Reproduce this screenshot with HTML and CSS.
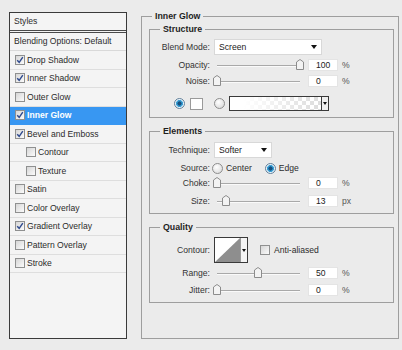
FILE: index.html
```html
<!DOCTYPE html>
<html lang="en">
<head>
  <meta charset="UTF-8" />
  <title>Layer Style - Inner Glow</title>
  <link rel="stylesheet" href="styles.css">
</head>
<body>
  <div class="dialog">
    <ul class="styles-list">
      <li class="list-head">Styles</li>
      <li class="list-blend">Blending Options: Default</li>
      <li class="list-item"><span class="cb on"><svg viewBox="0 0 8 8"><path d="M1.2 4.2L3.2 6.3L6.8 1.2"/></svg></span>Drop Shadow</li>
      <li class="list-item"><span class="cb on"><svg viewBox="0 0 8 8"><path d="M1.2 4.2L3.2 6.3L6.8 1.2"/></svg></span>Inner Shadow</li>
      <li class="list-item"><span class="cb"></span>Outer Glow</li>
      <li class="list-item active"><span class="cb on"><svg viewBox="0 0 8 8"><path d="M1.2 4.2L3.2 6.3L6.8 1.2"/></svg></span>Inner Glow</li>
      <li class="list-item"><span class="cb on"><svg viewBox="0 0 8 8"><path d="M1.2 4.2L3.2 6.3L6.8 1.2"/></svg></span>Bevel and Emboss</li>
      <li class="list-item sub"><span class="cb"></span>Contour</li>
      <li class="list-item sub"><span class="cb"></span>Texture</li>
      <li class="list-item"><span class="cb"></span>Satin</li>
      <li class="list-item"><span class="cb"></span>Color Overlay</li>
      <li class="list-item"><span class="cb on"><svg viewBox="0 0 8 8"><path d="M1.2 4.2L3.2 6.3L6.8 1.2"/></svg></span>Gradient Overlay</li>
      <li class="list-item"><span class="cb"></span>Pattern Overlay</li>
      <li class="list-item"><span class="cb"></span>Stroke</li>
    </ul>

    <fieldset class="group outer">
      <legend>Inner Glow</legend>

      <fieldset class="group inner structure">
        <legend>Structure</legend>
        <div class="row r-blend">
          <span class="lbl">Blend Mode:</span>
          <div class="select blend"><span>Screen</span><i class="arrow"></i></div>
        </div>
        <div class="row r-opacity">
          <span class="lbl">Opacity:</span>
          <div class="slider"><svg class="thumb" style="left: 82px" viewBox="0 0 8 11"><path d="M0.5 10.5V3L4 0.5L7.5 3V10.5Z"/></svg></div>
          <span class="num">100</span><span class="unit">%</span>
        </div>
        <div class="row r-noise">
          <span class="lbl">Noise:</span>
          <div class="slider"><svg class="thumb" style="left: -1px" viewBox="0 0 8 11"><path d="M0.5 10.5V3L4 0.5L7.5 3V10.5Z"/></svg></div>
          <span class="num">0</span><span class="unit">%</span>
        </div>
        <div class="row r-color">
          <span class="radio on"></span>
          <span class="swatch"></span>
          <span class="radio radio-grad"></span>
          <div class="grad"><span class="grad-fill"></span><span class="grad-arrow"><i class="arrow"></i></span></div>
        </div>
      </fieldset>

      <fieldset class="group inner elements">
        <legend>Elements</legend>
        <div class="row r-technique">
          <span class="lbl">Technique:</span>
          <div class="select technique"><span>Softer</span><i class="arrow"></i></div>
        </div>
        <div class="row r-source">
          <span class="lbl">Source:</span>
          <span class="radio src-center"></span><span class="opt">Center</span>
          <span class="radio on src-edge"></span><span class="opt">Edge</span>
        </div>
        <div class="row r-choke">
          <span class="lbl">Choke:</span>
          <div class="slider"><svg class="thumb" style="left: -1px" viewBox="0 0 8 11"><path d="M0.5 10.5V3L4 0.5L7.5 3V10.5Z"/></svg></div>
          <span class="num">0</span><span class="unit">%</span>
        </div>
        <div class="row r-size">
          <span class="lbl">Size:</span>
          <div class="slider"><svg class="thumb" style="left: 8px" viewBox="0 0 8 11"><path d="M0.5 10.5V3L4 0.5L7.5 3V10.5Z"/></svg></div>
          <span class="num">13</span><span class="unit">px</span>
        </div>
      </fieldset>

      <fieldset class="group inner quality">
        <legend>Quality</legend>
        <div class="row r-contour">
          <span class="lbl">Contour:</span>
          <div class="contour">
            <svg class="curve" viewBox="0 0 25 24"><path d="M0 24L25 0V24Z"/></svg>
            <span class="contour-arrow"><i class="arrow"></i></span>
          </div>
          <span class="cb aa"></span><span class="opt">Anti-aliased</span>
        </div>
        <div class="row r-range">
          <span class="lbl">Range:</span>
          <div class="slider"><svg class="thumb" style="left: 40px" viewBox="0 0 8 11"><path d="M0.5 10.5V3L4 0.5L7.5 3V10.5Z"/></svg></div>
          <span class="num">50</span><span class="unit">%</span>
        </div>
        <div class="row r-jitter">
          <span class="lbl">Jitter:</span>
          <div class="slider"><svg class="thumb" style="left: -1px" viewBox="0 0 8 11"><path d="M0.5 10.5V3L4 0.5L7.5 3V10.5Z"/></svg></div>
          <span class="num">0</span><span class="unit">%</span>
        </div>
      </fieldset>
    </fieldset>
  </div>
</body>
</html>
```

FILE: styles.css
```css
* {
  box-sizing: border-box;
}
body {
  margin: 0;
  width: 402px;
  height: 350px;
  overflow: hidden;
  background: #ebebeb;
  font-family: 'Liberation Sans', Arial, sans-serif;
  font-size: 8.6px;
  color: #2b2b2b;
}
.dialog {
  display: flex;
  align-items: flex-start;
  gap: 14px;
  padding: 10px 0 0 9px;
}

/* lista stilova lijevo */
.styles-list {
  list-style: none;
  margin: 2px 0 0;
  padding: 0;
  width: 118px;
  height: 327px;
  border: 1px solid #3a3a3a;
  background: #f4f4f4;
}
.list-head {
  height: 20px;
  line-height: 17px;
  padding-left: 4px;
  border-bottom: 3px double #4a4a4a;
}
.list-blend {
  height: 18px;
  line-height: 17px;
  padding-left: 4px;
  border-bottom: 1px solid #d9d9d9;
}
.list-item {
  height: 18.5px;
  display: flex;
  align-items: center;
  gap: 2px;
  padding-left: 5px;
  border-bottom: 1px solid #dedede;
}
.list-item.sub {
  padding-left: 16px;
}
.list-item.active {
  background: #3897f2;
  color: #fff;
  font-weight: 700;
  border-bottom-color: #3897f2;
}
.cb {
  width: 10px;
  height: 10px;
  flex: none;
  border: 1px solid #8f9090;
  background: linear-gradient(135deg, #d6d6d6, #fbfbfb);
}
.cb svg {
  display: block;
  width: 8px;
  height: 8px;
}
.cb path {
  fill: none;
  stroke: #2f4a8e;
  stroke-width: 1.4;
}

/* grupe desno */
.group {
  margin: 0;
  min-width: 0;
  border: 1px solid #9e9e9e;
}
.group legend {
  padding: 0 3px;
  line-height: 12px;
  font-size: 8.8px;
  font-weight: 700;
  color: #1e1e1e;
}
.outer {
  width: 258px;
  padding: 0 4px 35px 7px;
}
.outer > legend {
  margin-left: 3px;
}
.inner {
  width: 245px;
  padding: 0 0 6px 0;
  margin-top: 7px;
}
.inner > legend {
  margin-left: 10px;
}
.structure {
  margin-top: 1px;
}

.row {
  display: flex;
  align-items: center;
  height: 12px;
}
.lbl {
  width: 60px;
  margin-right: 4px;
  text-align: right;
  color: #333;
}
.r-blend { margin-top: 4px; height: 16px; }
.r-opacity { margin-top: 4px; }
.r-noise { margin-top: 4px; }
.r-color { margin-top: 9px; height: 15px; padding-left: 24px; }
.r-technique { margin-top: 5px; height: 16px; }
.r-source { margin-top: 4px; }
.r-choke { margin-top: 3px; }
.r-size { margin-top: 6px; }
.r-contour { margin-top: 4px; height: 26px; }
.r-range { margin-top: 4px; }
.r-jitter { margin-top: 5px; }

.select {
  height: 16px;
  display: flex;
  align-items: center;
  justify-content: space-between;
  padding: 0 4px 0 4px;
  background: #fff;
  border: 1px solid #d8d8d8;
  color: #222;
}
.blend { width: 108px; }
.technique { width: 58px; }
.arrow {
  display: block;
  width: 0;
  height: 0;
  border-left: 3px solid transparent;
  border-right: 3px solid transparent;
  border-top: 4px solid #111;
}

.slider {
  position: relative;
  width: 90px;
  height: 12px;
}
.slider::before {
  content: '';
  position: absolute;
  left: 3px;
  top: 6px;
  width: 83px;
  height: 1px;
  background: #a9a9a9;
  box-shadow: 0 1px 0 #fafafa;
}
.thumb {
  position: absolute;
  top: 0;
  width: 8px;
  height: 11px;
}
.thumb path {
  fill: #f3f3f3;
  stroke: #8c8c8c;
}
.num {
  width: 30px;
  height: 12px;
  margin-left: 4px;
  padding-left: 7px;
  line-height: 10px;
  background: #fff;
  border: 1px solid #e4e4e4;
  color: #222;
}
.unit {
  margin-left: 4px;
  color: #555;
}

.radio {
  width: 11px;
  height: 11px;
  flex: none;
  border-radius: 50%;
  border: 1px solid #8d8d8d;
  background: radial-gradient(circle at 40% 35%, #fff, #d4d4d4);
}
.radio.on {
  border-color: #62809a;
  background: radial-gradient(circle, #15507f 0 1.8px, #3aa0d6 2.4px 3.2px, #e8f3fa 3.8px);
}
.swatch {
  width: 13px;
  height: 12px;
  margin-left: 5px;
  background: #fff;
  border: 1px solid #9a9a9a;
}
.radio-grad {
  margin-left: 11px;
}
.grad {
  display: flex;
  width: 100px;
  height: 15px;
  margin-left: 4px;
  border: 1px solid #3a3a3a;
}
.grad-fill {
  flex: 1;
  background:
    linear-gradient(90deg, #fff 15%, rgba(255, 255, 255, 0) 100%),
    repeating-conic-gradient(#dcdcdc 0 25%, #fff 0 50%) 0 0 / 8px 8px;
}
.grad-arrow {
  width: 7px;
  display: flex;
  align-items: center;
  justify-content: center;
  border-left: 1px solid #3a3a3a;
  background: #f0f0f0;
}
.grad-arrow .arrow {
  border-left-width: 2px;
  border-right-width: 2px;
  border-top-width: 3px;
}

.src-center {
  margin-left: -2px;
}
.opt {
  margin-left: 3px;
  color: #2b2b2b;
}
.src-edge {
  margin-left: 13px;
}

.contour {
  display: flex;
  width: 34px;
  height: 26px;
  border: 1px solid #3a3a3a;
  background: #fff;
}
.curve {
  display: block;
  width: 25px;
  height: 24px;
}
.curve path {
  fill: #8e8e8e;
}
.contour-arrow {
  flex: 1;
  display: flex;
  align-items: center;
  justify-content: center;
  border-left: 1px solid #9a9a9a;
  background: #f4f4f4;
}
.contour-arrow .arrow {
  border-left-width: 2px;
  border-right-width: 2px;
  border-top-width: 3px;
}
.aa {
  margin-left: 12px;
}
.aa + .opt {
  margin-left: 4px;
}
```
